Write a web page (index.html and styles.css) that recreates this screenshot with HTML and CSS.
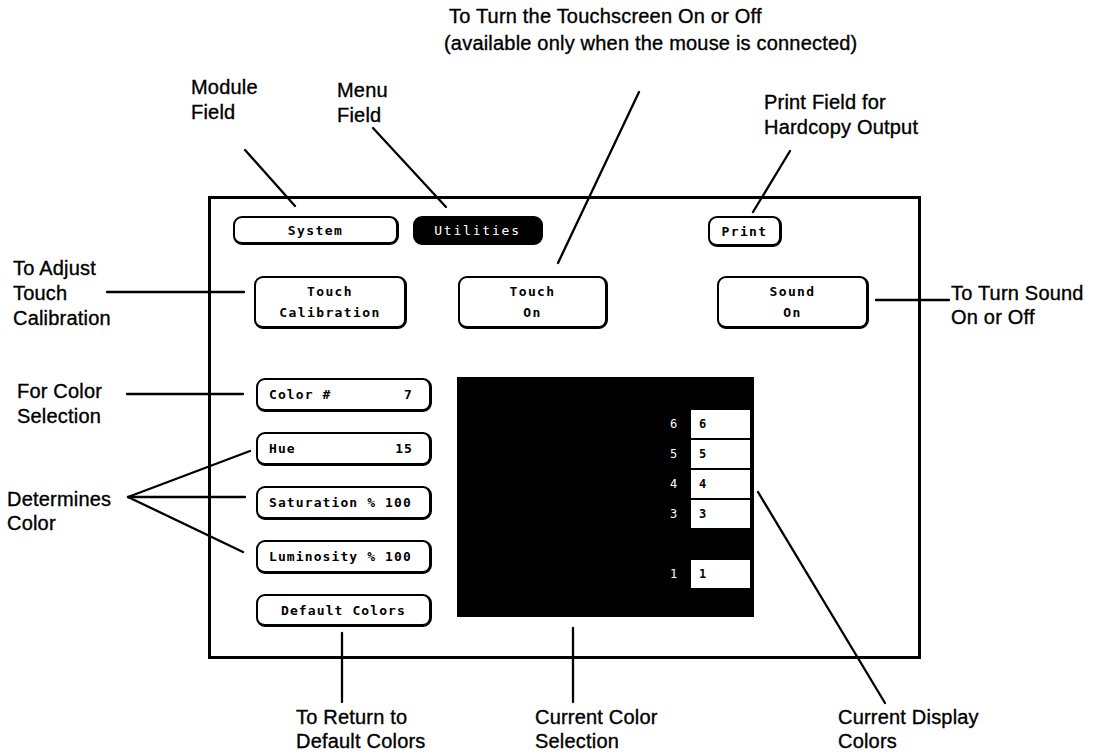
FILE: index.html
```html
<!DOCTYPE html>
<html>
<head>
    <meta charset="UTF-8">
    <title>System Utilities</title>
    <link rel="stylesheet" href="styles.css">
</head>
<body>
  <div class="sheet">

    <!-- the instrument screen -->
    <div class="screen">
      <div class="row row-top">
        <div class="key key-system">System</div>
        <div class="key key-menu">Utilities</div>
        <div class="key key-print">Print</div>
      </div>

      <div class="row row-touch">
        <div class="key key-big key-calib">Touch<br>Calibration</div>
        <div class="key key-big key-touch">Touch<br>On</div>
        <div class="key key-big key-sound">Sound<br>On</div>
      </div>

      <div class="row row-color">
        <div class="fields">
          <div class="key key-field"><span>Color #</span><span>7</span></div>
          <div class="key key-field"><span>Hue</span><span>15</span></div>
          <div class="key key-field"><span>Saturation % 100</span></div>
          <div class="key key-field"><span>Luminosity % 100</span></div>
          <div class="key key-field key-default"><span>Default Colors</span></div>
        </div>

        <div class="display">
          <div class="swatch-row"><span class="num">6</span><span class="swatch">6</span></div>
          <div class="swatch-row"><span class="num">5</span><span class="swatch">5</span></div>
          <div class="swatch-row"><span class="num">4</span><span class="swatch">4</span></div>
          <div class="swatch-row"><span class="num">3</span><span class="swatch">3</span></div>
          <div class="swatch-row"></div>
          <div class="swatch-row"><span class="num">1</span><span class="swatch">1</span></div>
        </div>
      </div>
    </div>

    <!-- leader lines -->
    <svg class="leaders" width="1106" height="755" viewBox="0 0 1106 755">
      <g stroke="#000" stroke-width="2.3" fill="none" stroke-linecap="round">
        <line x1="245" y1="150" x2="295" y2="206"/>
        <line x1="373" y1="128" x2="446" y2="207"/>
        <line x1="639" y1="92" x2="558" y2="263"/>
        <line x1="790" y1="151" x2="753" y2="212"/>
        <line x1="107" y1="292" x2="244" y2="292"/>
        <line x1="876" y1="300" x2="949" y2="300"/>
        <line x1="127" y1="394" x2="243" y2="394"/>
        <line x1="128" y1="497" x2="250" y2="451"/>
        <line x1="128" y1="497" x2="245" y2="497"/>
        <line x1="128" y1="497" x2="243" y2="552"/>
        <line x1="342" y1="633" x2="342" y2="702"/>
        <line x1="573" y1="628" x2="573" y2="702"/>
        <line x1="758" y1="492" x2="885" y2="703"/>
      </g>
    </svg>

    <!-- callout texts -->
    <div class="note n-touchscreen"><div class="first">To Turn the Touchscreen On or Off</div><div>(available only when the mouse is connected)</div></div>
    <div class="note n-module">Module<br>Field</div>
    <div class="note n-menu">Menu<br>Field</div>
    <div class="note n-print">Print Field for<br>Hardcopy Output</div>
    <div class="note n-calib">To Adjust<br>Touch<br>Calibration</div>
    <div class="note n-sound">To Turn Sound<br>On or Off</div>
    <div class="note n-select">For Color<br>Selection</div>
    <div class="note n-determine">Determines<br>Color</div>
    <div class="note n-default">To Return to<br>Default Colors</div>
    <div class="note n-current">Current Color<br>Selection</div>
    <div class="note n-display">Current Display<br>Colors</div>

  </div>
</body>
</html>
```

FILE: styles.css
```css
body {
    margin: 0;
    background-color: #fff;
}

.sheet {
    position: relative;
    width: 1106px;
    height: 755px;
    overflow: hidden;
    color: #000;
    font-family: "Liberation Sans", Arial, sans-serif;
}

/* screen frame */
.screen {
    position: absolute;
    left: 208px;
    top: 196px;
    width: 713px;
    height: 463px;
    box-sizing: border-box;
    border: 3px solid #000;
    display: flex;
    flex-direction: column;
}

.row {
    display: flex;
    align-items: flex-start;
}
.row-top {
    margin-top: 17px;
    padding-left: 22px;
}
.row-touch {
    margin-top: 29px;
    padding-left: 43px;
}
.row-color {
    margin-top: 49px;
    padding-left: 45px;
}

/* keys */
.key {
    box-sizing: border-box;
    height: 29px;
    border: 2px solid #000;
    border-right-width: 3px;
    border-bottom-width: 3px;
    border-radius: 9px;
    background: #fff;
    display: flex;
    align-items: center;
    justify-content: center;
    font-family: "DejaVu Sans Mono", monospace;
    font-weight: bold;
    font-size: 13px;
    letter-spacing: 1.4px;
    color: #000;
    white-space: nowrap;
}
.key-system { width: 166px; }
.key-menu {
    width: 130px;
    margin-left: 14px;
    background: #000;
    color: #fff;
    font-weight: normal;
    letter-spacing: 1.8px;
}
.key-print {
    width: 74px;
    height: 31px;
    margin-left: 165px;
}

.key-big {
    height: 53px;
    text-align: center;
    line-height: 21px;
}
.key-calib { width: 153px; }
.key-touch { width: 150px; margin-left: 51px; }
.key-sound { width: 152px; margin-left: 109px; }

.fields {
    display: flex;
    flex-direction: column;
    gap: 20px;
    width: 176px;
}
.key-field {
    height: 34px;
    justify-content: space-between;
    padding: 0 16px 0 11px;
    letter-spacing: 1.1px;
}
.key-default {
    justify-content: center;
    padding: 0;
    height: 33px;
}

/* colour display */
.display {
    box-sizing: border-box;
    width: 297px;
    height: 240px;
    margin-left: 25px;
    margin-top: -1px;
    background: #000;
    padding: 33px 4px 0 0;
    display: flex;
    flex-direction: column;
    align-items: flex-end;
    gap: 2px;
}
.swatch-row {
    display: flex;
    height: 28px;
    align-items: center;
}
.num {
    width: 21px;
    color: #fff;
    font-family: "DejaVu Sans Mono", monospace;
    font-size: 12px;
}
.swatch {
    box-sizing: border-box;
    width: 59px;
    height: 28px;
    background: #fff;
    color: #000;
    padding-left: 8px;
    display: flex;
    align-items: center;
    font-family: "DejaVu Sans Mono", monospace;
    font-weight: bold;
    font-size: 12px;
}

/* leader lines */
.leaders {
    position: absolute;
    left: 0;
    top: 0;
    pointer-events: none;
}

/* callout notes */
.note {
    position: absolute;
    font-size: 20px;
    line-height: 25px;
    letter-spacing: 0.2px;
    -webkit-text-stroke: 0.35px #000;
    white-space: nowrap;
}
.n-touchscreen {
    left: 444px;
    top: 3px;
    line-height: 27px;
}
.n-touchscreen .first {
    padding-left: 5px;
}
.n-module { left: 191px; top: 75px; }
.n-menu { left: 337px; top: 78px; }
.n-print { left: 764px; top: 90px; }
.n-calib { left: 13px; top: 256px; }
.n-sound { left: 951px; top: 281px; line-height: 24px; }
.n-select { left: 17px; top: 379px; }
.n-determine { left: 7px; top: 487px; line-height: 24px; }
.n-default { left: 296px; top: 705px; line-height: 24px; }
.n-current { left: 535px; top: 705px; line-height: 24px; }
.n-display { left: 838px; top: 705px; line-height: 24px; }
```
